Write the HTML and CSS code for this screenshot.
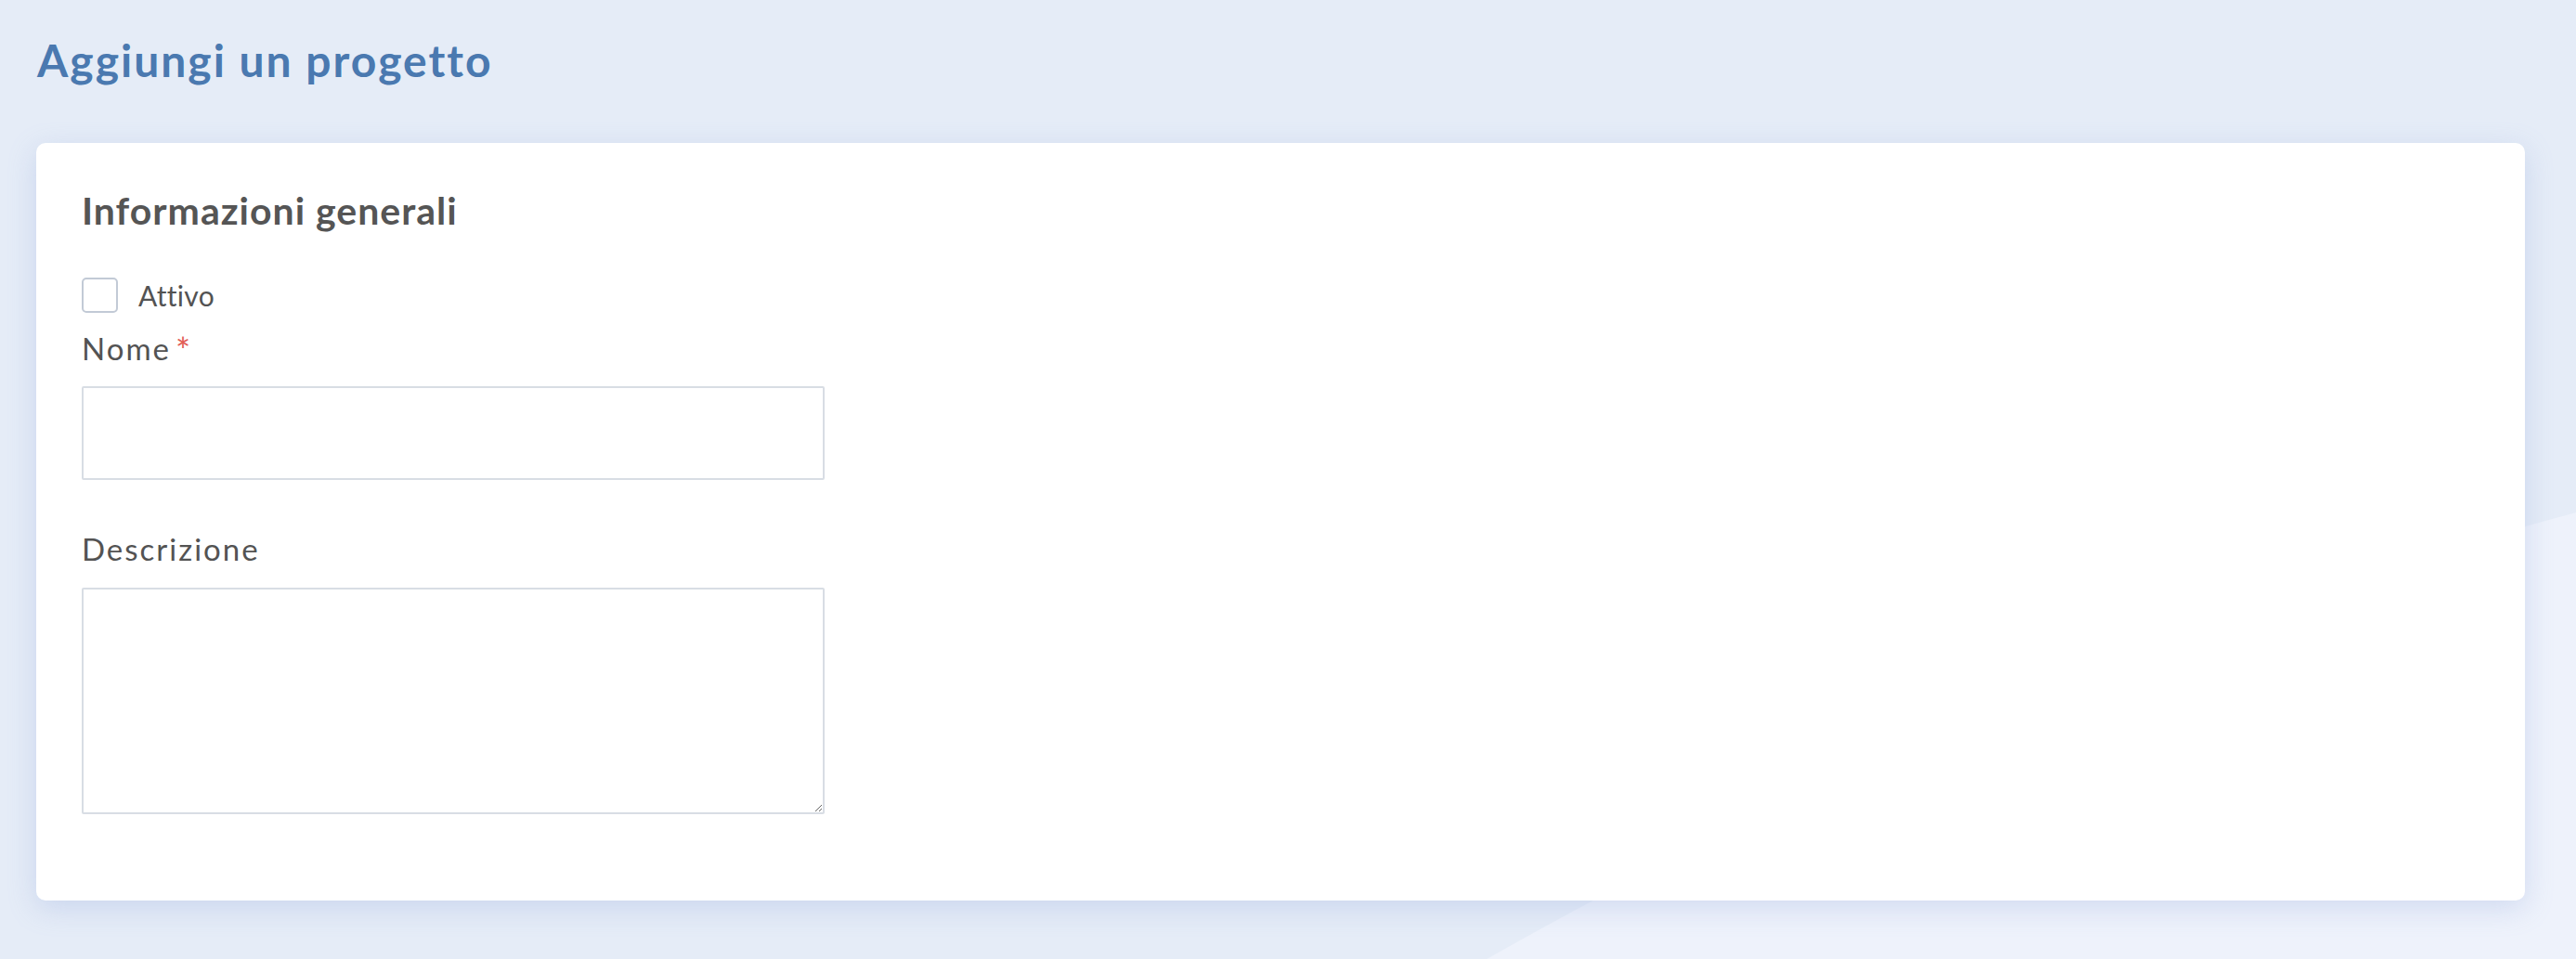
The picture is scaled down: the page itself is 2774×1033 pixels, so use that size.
FILE: index.html
```html
<!DOCTYPE html>
<html lang="it">
<head>
    <meta charset="UTF-8">
    <title>Aggiungi un progetto</title>
    <link rel="stylesheet" href="styles.css">
</head>
<body>

<div class="page">
    <h1 class="page-title">Aggiungi un progetto</h1>

    <form class="card" id="projectForm">
        <h2 class="section-title">Informazioni generali</h2>

        <label class="check-row">
            <input type="checkbox" name="attivo">
            <span>Attivo</span>
        </label>

        <div class="field">
            <label for="nome">Nome<span class="req">*</span></label>
            <input type="text" id="nome" name="nome">
        </div>

        <div class="field">
            <label for="descrizione">Descrizione</label>
            <textarea id="descrizione" name="descrizione"></textarea>
        </div>
    </form>
</div>

</body>
</html>
```

FILE: styles.css
```css
html, body {
    margin: 0;
    padding: 0;
    min-height: 100vh;
}
body {
    font-family: Lato, "Liberation Sans", sans-serif;
    color: #535353;
    background-color: #e5ecf7;
    /* lighter round shape at bottom right */
    background-image: radial-gradient(circle 5000px at 4069px 5381px, #eef2fb 4999px, rgba(238, 242, 251, 0) 5000px);
    background-repeat: no-repeat;
}
.page {
    padding: 36px 55px 40px 39px;
}
.page-title {
    margin: 0 0 60px 1px;
    font-size: 48px;
    line-height: 1.2;
    font-weight: 700;
    letter-spacing: 2px;
    color: #4a79b0;
}
.card {
    background-color: #fff;
    border-radius: 10px;
    box-shadow: 0 8px 30px rgba(140, 162, 220, 0.3);
    padding: 48px 49px 93px;
}
.section-title {
    margin: 0 0 48px;
    font-size: 41px;
    line-height: 1.2;
    font-weight: 700;
    letter-spacing: 1px;
    color: #555;
}
.check-row {
    display: flex;
    align-items: center;
    gap: 22px;
    font-size: 30px;
    letter-spacing: 0.3px;
    cursor: pointer;
}
.check-row input {
    appearance: none;
    -webkit-appearance: none;
    margin: 0;
    width: 39px;
    height: 38px;
    border: 2px solid #c2cad6;
    border-radius: 5px;
    background: #fff;
}
.field {
    display: flex;
    flex-direction: column;
    align-items: flex-start;
    margin-top: 19px;
}
.field + .field {
    margin-top: 55px;
}
.field label {
    font-size: 33px;
    line-height: 1.2;
    letter-spacing: 2px;
    margin-bottom: 21px;
}
.req {
    color: #e25c55;
    font-size: 38px;
    line-height: 0;
    vertical-align: -4px;
    margin-left: 5px;
}
.field input,
.field textarea {
    box-sizing: border-box;
    width: 800px;
    border: 2px solid #d8dde4;
    border-radius: 2px;
    font-family: inherit;
    font-size: 30px;
    padding: 10px 16px;
    background: #fff;
    outline: none;
}
.field input {
    height: 101px;
}
.field textarea {
    height: 244px;
    resize: vertical;
}
```
